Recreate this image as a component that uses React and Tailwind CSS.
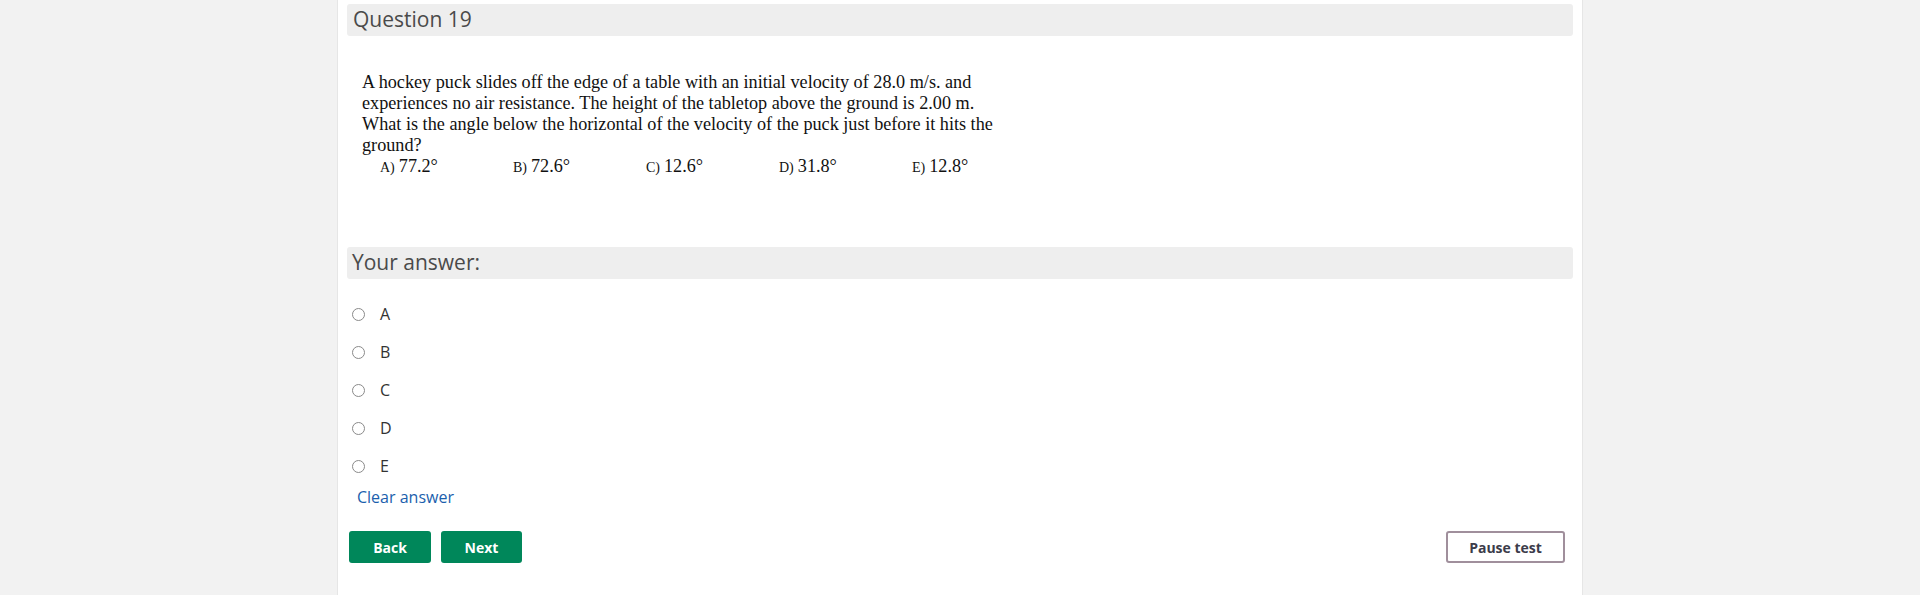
export default function App() {
  const opts = ["A", "B", "C", "D", "E"];
  const choices = [
    ["A)", "77.2°"],
    ["B)", "72.6°"],
    ["C)", "12.6°"],
    ["D)", "31.8°"],
    ["E)", "12.8°"],
  ];
  return (
    <div className="w-[1920px] h-[595px] bg-[#f2f2f2] flex overflow-hidden" style={{ fontFamily: '"Open Sans", sans-serif' }}>
      <div className="ml-[337px] w-[1246px] h-full bg-white border-x border-[#e6e6e6] px-[9px] pt-[4px]">
        <div className="h-[32px] bg-[#eeeeee] rounded-[3px] flex items-center pl-[6px] text-[21px] text-[#4a4a4a]">
          Question 19
        </div>
        <div className="mt-[36px] pl-[15px] text-[#111] text-[18.2px] leading-[21px]" style={{ fontFamily: '"Liberation Serif", serif' }}>
          <div>A hockey puck slides off the edge of a table with an initial velocity of 28.0 m/s. and</div>
          <div>experiences no air resistance. The height of the tabletop above the ground is 2.00 m.</div>
          <div>What is the angle below the horizontal of the velocity of the puck just before it hits the</div>
          <div>ground?</div>
          <div className="flex pl-[18px]">
            {choices.map(([l, v]) => (
              <div key={l} className="w-[133px] flex items-baseline">
                <span className="text-[14px]">{l}</span>
                <span className="ml-[4px]">{v}</span>
              </div>
            ))}
          </div>
        </div>
        <div className="mt-[69px] h-[32px] bg-[#eeeeee] rounded-[3px] flex items-center pl-[5px] text-[21px] text-[#4a4a4a]">
          Your answer:
        </div>
        <div className="mt-[16px] flex flex-col">
          {opts.map((o) => (
            <div key={o} className="h-[38px] flex items-center pl-[5px]">
              <span className="w-[13px] h-[13px] rounded-full border border-[#8a8a8a] bg-white"></span>
              <span className="ml-[15px] text-[16px] text-[#333]">{o}</span>
            </div>
          ))}
        </div>
        <div className="mt-[1px] pl-[10px] text-[16px] text-[#1b5fad] leading-[22px]">Clear answer</div>
        <div className="mt-[23px] flex items-center pl-[2px]">
          <button className="w-[82px] h-[32px] rounded-[3px] bg-[#00875a] text-white font-bold text-[14px]">Back</button>
          <button className="ml-[10px] w-[81px] h-[32px] rounded-[3px] bg-[#00875a] text-white font-bold text-[14px]">Next</button>
          <div className="flex-1"></div>
          <button className="mr-[8px] w-[119px] h-[32px] rounded-[3px] border-2 border-[#a08f9c] bg-white text-[#3c3c4a] font-bold text-[14px]">Pause test</button>
        </div>
      </div>
    </div>
  );
}
